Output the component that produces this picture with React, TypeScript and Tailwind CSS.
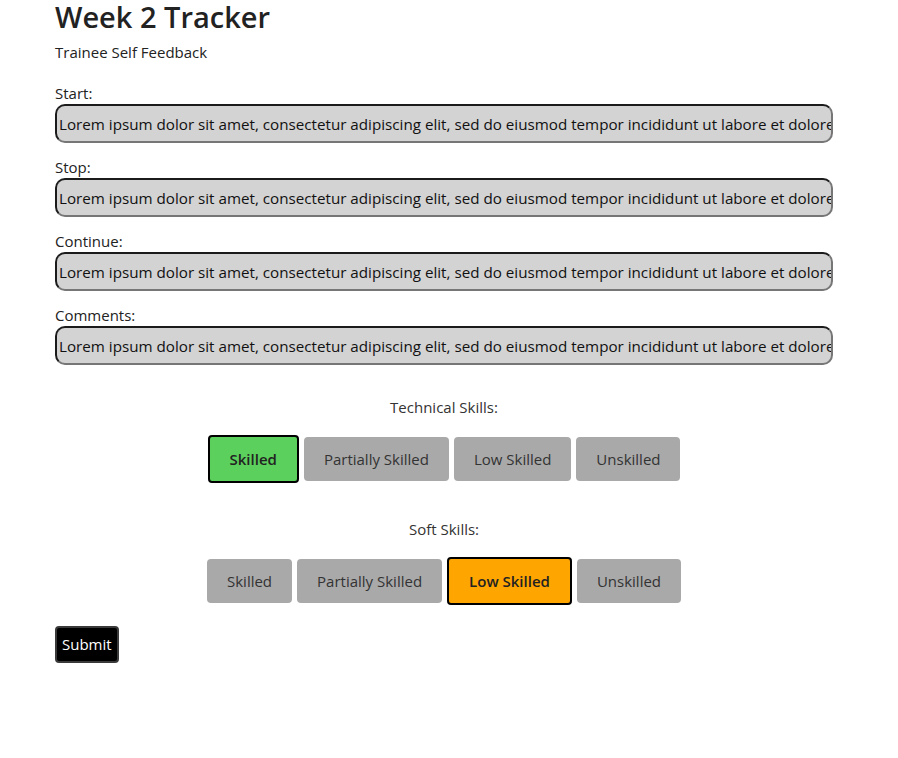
import { useState } from "react";

const LOREM =
  "Lorem ipsum dolor sit amet, consectetur adipiscing elit, sed do eiusmod tempor incididunt ut labore et dolore magna aliqua.";

const LEVELS = ["Skilled", "Partially Skilled", "Low Skilled", "Unskilled"];

function Field({ label }: { label: string }) {
  return (
    <div className="mb-[13px]">
      <label className="block leading-[22px]">{label}</label>
      <input
        readOnly
        value={LOREM}
        className="block w-full h-[39px] pl-[2px] rounded-[10px] bg-[#d3d3d3] text-[15.2px] text-[#111] border-2 border-t-[#1b1b1b] border-l-[#1b1b1b] border-b-[#767676] border-r-[#767676] outline-none"
      />
    </div>
  );
}

function SkillRow({
  title,
  picked,
  onPick,
  color,
}: {
  title: string;
  picked: string;
  onPick: (v: string) => void;
  color: string;
}) {
  return (
    <div className="text-center">
      <p className="leading-[22px] text-[#333]">{title}</p>
      <div className="mt-[17px] flex items-center justify-center gap-[5px]">
        {LEVELS.map((lvl) =>
          lvl === picked ? (
            <button
              key={lvl}
              onClick={() => onPick(lvl)}
              className={`h-[48px] px-[20px] rounded-[4px] border-2 border-black font-semibold text-[#222] ${color}`}
            >
              {lvl}
            </button>
          ) : (
            <button
              key={lvl}
              onClick={() => onPick(lvl)}
              className="h-[44px] px-[20px] rounded-[4px] bg-[#a9a9a9] text-[#333]"
            >
              {lvl}
            </button>
          )
        )}
      </div>
    </div>
  );
}

export default function App() {
  const [tech, setTech] = useState("Skilled");
  const [soft, setSoft] = useState("Low Skilled");

  return (
    <div className="min-h-screen bg-white pl-[55px] pt-[1px] text-[15px] text-[#222] font-['Open_Sans',sans-serif]">
      <h1 className="text-[29px] font-semibold leading-[32px]">Week 2 Tracker</h1>
      <p className="mt-[8px] leading-[22px]">Trainee Self Feedback</p>

      <div className="mt-[19px] w-[778px]">
        <Field label="Start:" />
        <Field label="Stop:" />
        <Field label="Continue:" />
        <Field label="Comments:" />

        <div className="pt-[18px]">
          <SkillRow title="Technical Skills:" picked={tech} onPick={setTech} color="bg-[#5cd05c]" />
        </div>
        <div className="mt-[35px]">
          <SkillRow title="Soft Skills:" picked={soft} onPick={setSoft} color="bg-[#ffa500]" />
        </div>
      </div>

      <button className="mt-[21px] h-[37px] px-[5px] rounded-[4px] bg-black text-white border-2 border-[#3a3a3a]">
        Submit
      </button>
    </div>
  );
}
